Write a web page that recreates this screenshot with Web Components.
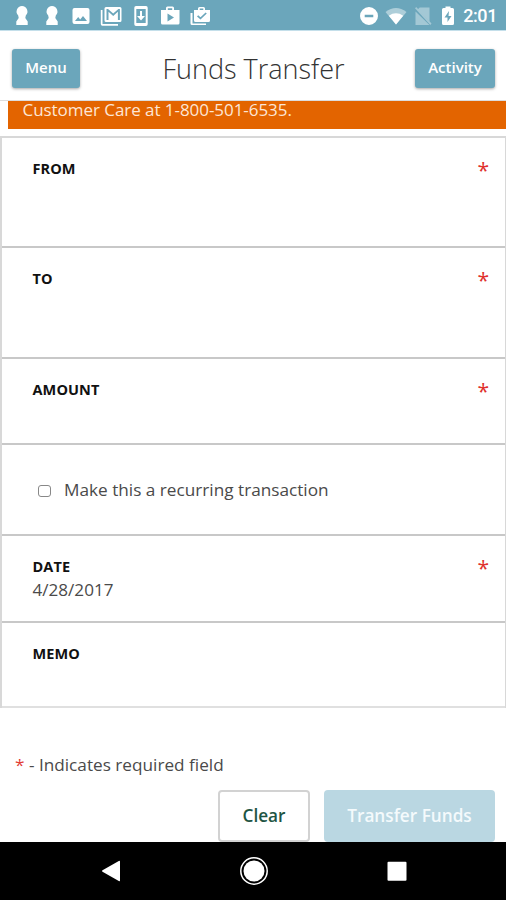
<!DOCTYPE html>
<html lang="en">
<head>
<meta charset="utf-8">
<meta name="viewport" content="width=device-width, initial-scale=1">
<title>Funds Transfer</title>
<style>
  html, body { height: 100%; }
  body {
    margin: 0;
    overflow: hidden;
    background: #fff;
    color: #4a4a4a;
    font-family: "Open Sans", "Noto Sans", sans-serif;
  }
</style>
</head>
<body>
<transfer-page></transfer-page>

<script>
// Android status bar: notification icons on the left, system icons and clock on the right
class StatusBar extends HTMLElement {
  constructor() {
    super();
    this.attachShadow({ mode: "open" });
  }

  connectedCallback() {
    // keyhole shape, shown for two pending notifications
    const keyhole = `<svg width="22" height="22" viewBox="0 0 22 22"><path d="M11 1a5.500 5.500 0 0 1 3.800 9.400L14.300 13l2.400 3.500V20H5.300v-3.500L7.700 13l-.5-2.600A5.500 5.500 0 0 1 11 1z"/></svg>`;

    this.shadowRoot.innerHTML = `
      <style>
        :host {
          display: flex;
          justify-content: space-between;
          align-items: center;
          height: 30px;
          box-sizing: border-box;
          padding: 1px 9px 0 11px;
          background: #6ba6bb;
          color: #fff;
        }
        svg { display: block; fill: #fff; }
        .notifications { display: flex; gap: 7.7px; }
        .system { display: flex; align-items: center; gap: 4px; }
        .clock {
          font: 500 18px/20px Roboto, sans-serif;
          margin-left: 1px;
          letter-spacing: -0.4px;
        }
      </style>
      <div class="notifications">
        ${keyhole}
        ${keyhole}
        <svg width="22" height="22" viewBox="0 0 22 22"><path fill-rule="evenodd" d="M4.500 3h13a2 2 0 0 1 2 2v12a2 2 0 0 1-2 2h-13a2 2 0 0 1-2-2V5a2 2 0 0 1 2-2zM5 16h12l-4-5-2.800 3.400L8.200 12z"/></svg>
        <svg width="22" height="22" viewBox="0 0 22 22"><path fill-rule="evenodd" d="M6 2h14q1.500 0 1.500 1.500v12Q21.500 17 20 17H6q-1.500 0-1.500-1.500v-12Q4.500 2 6 2zM6.500 4v11h2V6.700l4.700 4.200 4.700-4.200V15h2V4h-1.500l-5.200 4.600L8 4z"/><path d="M.8 5h1.700v14H18v1.700H2.300Q.8 20.700.8 19z"/></svg>
        <svg width="22" height="22" viewBox="0 0 22 22"><path fill-rule="evenodd" d="M6 1h10q1.700 0 1.700 1.700v16.600Q17.700 21 16 21H6q-1.700 0-1.700-1.700V2.700Q4.300 1 6 1zM6.300 4v14h9.400V4z"/><path d="M10 6h2v5h3l-4 4.500L7 11h3z"/></svg>
        <svg width="22" height="22" viewBox="0 0 22 22"><path fill-rule="evenodd" d="M7 5V3q0-1.500 1.500-1.500h5Q15 1.500 15 3v2h5.500v13q0 1.500-1.500 1.500H3.500Q2 19.500 2 18V5zM8.800 5h4.400V3.200H8.800zM8.500 8.500v8l6.500-4z"/></svg>
        <svg width="22" height="22" viewBox="0 0 22 22"><path fill-rule="evenodd" d="M9 5V3.500Q9 2 10.500 2h4Q16 2 16 3.500V5h5v10.500q0 1.500-1.500 1.500h-13Q5 17 5 15.500V5zm1.700 0h3.600V3.600h-3.600zm-1.500 5.200-1.200 1.200 3.500 3.200 6.300-6-1.200-1.200-5.100 4.900z"/><path d="M1.500 8h2v10.400H17V20H3q-1.500 0-1.500-1.500z"/></svg>
      </div>
      <div class="system">
        <svg width="22" height="22" viewBox="0 0 22 22"><path fill-rule="evenodd" d="M11 2a9 9 0 1 1 0 18 9 9 0 0 1 0-18zM6.700 9.800v2.400h8.600V9.800z"/></svg>
        <svg width="24" height="22" viewBox="0 0 24 22"><path opacity=".45" d="M1.500 7Q12-.800 22.500 7L12 19.500z"/><path d="M4.800 10.700Q12 6 19.200 10.700L12 19.500z"/></svg>
        <svg width="22" height="22" viewBox="0 0 22 22" opacity=".38"><path d="M5.600 4.500 7.700 2.500h9.800v14.300zM3.500 6.500l14 13.500h-14z"/><path d="m3 3.200 1.200-1.200L19.500 18.500 18.300 20z"/></svg>
        <svg width="20" height="22" viewBox="0 0 20 22"><path fill-rule="evenodd" d="M7.500 3V1.500h5V3h2q1.500 0 1.500 1.500v14q0 1.500-1.500 1.500h-9Q4 20 4 18.500v-14Q4 3 5.500 3zM11 6l-4.500 6.500h3V17l4-6h-3z"/></svg>
        <span class="clock">2:01</span>
      </div>
    `;
  }
}

class AppButton extends HTMLElement {
  constructor() {
    super();
    this.attachShadow({ mode: "open" });
  }

  connectedCallback() {
    this.shadowRoot.innerHTML = `
      <style>
        :host { display: block; }
        button {
          display: block;
          width: 100%;
          height: 100%;
          padding: 0 0 2px;
          border: 0;
          border-radius: 3px;
          background: #6ba6bb;
          color: #fff;
          font: 600 15px/20px "Open Sans", sans-serif;
          box-shadow: 0 1px 3px rgba(0, 0, 0, 0.35);
        }
        :host([variant="outline"]) button,
        :host([variant="muted"]) button {
          padding-bottom: 0;
          border-radius: 4px;
          font-size: 17.2px;
          box-shadow: none;
        }
        :host([variant="outline"]) button {
          border: 2px solid #d2d2d2;
          background: #fff;
          color: #1e5443;
        }
        :host([variant="muted"]) button { background: #bad7e2; color: #f4fafc; }
      </style>
      <button type="button"><slot></slot></button>
    `;
  }
}

class AppHeader extends HTMLElement {
  constructor() {
    super();
    this.attachShadow({ mode: "open" });
  }

  connectedCallback() {
    this.shadowRoot.innerHTML = `
      <style>
        :host {
          display: grid;
          grid-template-columns: 80px 1fr 80px;
          align-items: center;
          height: 71px;
          box-sizing: border-box;
          padding: 5px 11px 0 12px;
          border-top: 1px solid #c4dfea;
          border-bottom: 1px solid #ddd;
        }
        h1 {
          margin: 0;
          text-align: center;
          color: #333;
          font-size: 27px;
          font-weight: 300;
          line-height: 38px;
          padding-top: 1px;
        }
        app-button { height: 39px; }
        .menu { width: 68px; }
      </style>
      <app-button class="menu">Menu</app-button>
      <h1><slot></slot></h1>
      <app-button>Activity</app-button>
    `;
  }
}

class FormRow extends HTMLElement {
  constructor() {
    super();
    this.attachShadow({ mode: "open" });
  }

  connectedCallback() {
    const label = this.getAttribute("label");
    this.shadowRoot.innerHTML = `
      <style>
        :host {
          display: flex;
          justify-content: space-between;
          box-sizing: border-box;
          padding: 19px 16px 0 30.5px;
          border-bottom: 2px solid #c8c8c8;
        }
        .label {
          color: #111;
          font-size: 14.5px;
          font-weight: 700;
          line-height: 23px;
          letter-spacing: 0.1px;
        }
        .value {
          font-size: 17.1px;
          line-height: 23px;
        }
        .required {
          color: #e0302c;
          font-size: 21px;
          line-height: 27px;
        }
      </style>
      <div>
        ${label ? `<div class="label">${label}</div>` : ""}
        <div class="value"><slot></slot></div>
      </div>
      ${this.hasAttribute("required") ? `<span class="required">*</span>` : ""}
    `;
  }
}

class CheckOption extends HTMLElement {
  constructor() {
    super();
    this.attachShadow({ mode: "open" });
  }

  connectedCallback() {
    this.shadowRoot.innerHTML = `
      <style>
        :host {
          display: flex;
          align-items: center;
          gap: 13px;
          font-size: 17.2px;
          line-height: 24px;
        }
        .box {
          width: 13px;
          height: 12px;
          box-sizing: border-box;
          border: 1px solid #888;
          border-radius: 3px;
          margin-top: 1px;
        }
      </style>
      <span class="box" role="checkbox" aria-checked="false"></span>
      <span><slot></slot></span>
    `;
  }
}

class NavBar extends HTMLElement {
  constructor() {
    super();
    this.attachShadow({ mode: "open" });
  }

  connectedCallback() {
    this.shadowRoot.innerHTML = `
      <style>
        :host {
          display: flex;
          justify-content: center;
          align-items: center;
          gap: 113px;
          height: 58px;
          padding-left: 1px;
          background: #000;
        }
        svg { display: block; fill: #fff; }
      </style>
      <svg width="30" height="30" viewBox="0 0 30 30"><path d="M24 5.500v19a.8.800 0 0 1-1.200.6L6.500 15.700a.8.800 0 0 1 0-1.400l16.300-9.400a.8.800 0 0 1 1.200.6z"/></svg>
      <svg width="30" height="30" viewBox="0 0 30 30"><circle cx="15" cy="15" r="13.200" fill="none" stroke="#fff" stroke-width="1.500"/><circle cx="15" cy="15" r="10.500"/></svg>
      <svg width="30" height="30" viewBox="0 0 30 30"><rect x="5.500" y="5.700" width="19" height="19" rx="1"/></svg>
    `;
  }
}

class TransferPage extends HTMLElement {
  constructor() {
    super();
    this.attachShadow({ mode: "open" });
  }

  connectedCallback() {
    this.shadowRoot.innerHTML = `
      <style>
        :host {
          display: flex;
          flex-direction: column;
          height: 900px;
        }
        main {
          flex: 1;
          min-height: 0;
        }
        .alert {
          height: 28px;
          box-sizing: border-box;
          margin-left: 8px;
          padding-left: 14.5px;
          background: #e36400;
          color: #fde6d5;
          font-size: 17px;
          line-height: 18px;
          letter-spacing: -0.05px;
        }
        .form {
          margin-top: 7px;
          border: solid #d8d8d8;
          border-width: 2px 1px 0 2px;
        }
        .from { height: 110px; }
        .to { height: 111px; }
        .amount { height: 86px; }
        .recurring { height: 91px; padding: 33px 17px 0 36px; }
        .date { height: 87px; }
        .memo { height: 85px; border-color: #e0e0e0; }
        .note {
          margin: 45px 0 0 15px;
          font-size: 17.2px;
          line-height: 24px;
        }
        .note b { color: #e23b35; font-weight: 400; }
        .actions {
          display: flex;
          justify-content: flex-end;
          gap: 14px;
          margin-top: 13px;
          padding-right: 11px;
        }
        .actions app-button { height: 52px; }
        .clear { width: 92px; }
        .submit { width: 171px; }
      </style>
      <status-bar></status-bar>
      <app-header>Funds Transfer</app-header>
      <main>
        <div class="alert">Customer Care at 1-800-501-6535.</div>
        <div class="form">
          <form-row class="from" label="FROM" required></form-row>
          <form-row class="to" label="TO" required></form-row>
          <form-row class="amount" label="AMOUNT" required></form-row>
          <form-row class="recurring"><check-option>Make this a recurring transaction</check-option></form-row>
          <form-row class="date" label="DATE" required>4/28/2017</form-row>
          <form-row class="memo" label="MEMO"></form-row>
        </div>
        <div class="note"><b>*</b> - Indicates required field</div>
        <div class="actions">
          <app-button class="clear" variant="outline">Clear</app-button>
          <app-button class="submit" variant="muted">Transfer Funds</app-button>
        </div>
      </main>
      <nav-bar></nav-bar>
    `;
  }
}

customElements.define("status-bar", StatusBar);
customElements.define("app-button", AppButton);
customElements.define("app-header", AppHeader);
customElements.define("form-row", FormRow);
customElements.define("check-option", CheckOption);
customElements.define("nav-bar", NavBar);
customElements.define("transfer-page", TransferPage);
</script>
</body>
</html>
